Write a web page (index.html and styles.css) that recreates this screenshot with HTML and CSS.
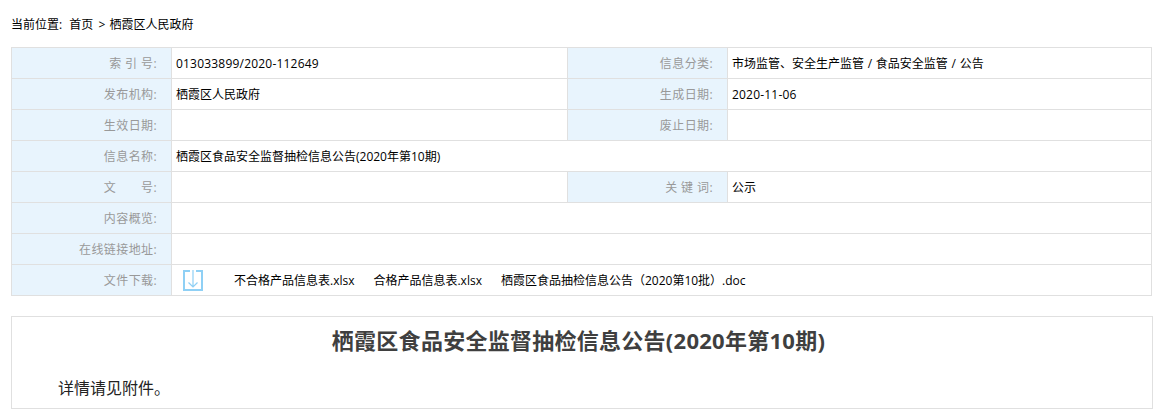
FILE: index.html
```html
<!DOCTYPE html>
<html lang="zh-CN">
<head>
<meta charset="utf-8">
<title>栖霞区食品安全监督抽检信息公告(2020年第10期)</title>
<link rel="stylesheet" href="styles.css">
</head>
<body>
<div class="crumb">当前位置: <a class="home">首页</a> <span class="gt">&gt;</span> <a>栖霞区人民政府</a></div>
<table class="meta">
<colgroup><col class="c1"><col class="c2"><col class="c3"><col class="c4"></colgroup>
<tr><th>索 引 号:</th><td><span class="num">013033899/2020-112649</span></td><th>信息分类:</th><td>市场监管、安全生产监管 / 食品安全监管 / 公告</td></tr>
<tr><th>发布机构:</th><td>栖霞区人民政府</td><th>生成日期:</th><td><span class="num">2020-11-06</span></td></tr>
<tr><th>生效日期:</th><td></td><th>废止日期:</th><td></td></tr>
<tr><th>信息名称:</th><td colspan="3">栖霞区食品安全监督抽检信息公告(2020年第10期)</td></tr>
<tr><th>文&emsp;&emsp;号:</th><td></td><th>关 键 词:</th><td>公示</td></tr>
<tr><th>内容概览:</th><td colspan="3"></td></tr>
<tr><th>在线链接地址:</th><td colspan="3"></td></tr>
<tr><th>文件下载:</th><td colspan="3"><div class="files">
<svg class="dl" width="20" height="21" viewBox="0 0 20 21" fill="none"><path d="M7 1H1v19h18V1h-6" stroke="#8fd0f5" stroke-width="2"/><path d="M10 0v17M5.500 12.500l4.500 4.500 4.500-4.500" stroke="#8fd0f5" stroke-width="1.200"/></svg>
<a class="file first">不合格产品信息表.xlsx</a><a class="file">合格产品信息表.xlsx</a><a class="file">栖霞区食品抽检信息公告（2020第10批）.doc</a>
</div></td></tr>
</table>
<div class="article">
<h1>栖霞区食品安全监督抽检信息公告(2020年第10期)</h1>
<p>详情请见附件。</p>
</div>
</body>
</html>
```
FILE: styles.css
```css
html, body { margin: 0; padding: 0; background: #fff; }
body {
  padding: 0 8px 0 11px;
  font-family: "Open Sans", "Noto Sans CJK SC", sans-serif;
  font-size: 12px;
  color: #000;
  overflow: hidden;
}
.crumb { height: 47px; line-height: 49px; color: #000; white-space: pre-wrap; }
.crumb .home { margin-left: 4px; }
.gt { margin: 0 1px 0 2px; }
.meta {
  width: 1141px;
  border-collapse: collapse;
  table-layout: fixed;
}
.c1 { width: 160px; }
.c2 { width: 396px; }
.c3 { width: 160px; }
.meta th, .meta td {
  border: 1px solid #e0e0e0;
  height: 30px;
  padding: 0;
  font-weight: 400;
}
.meta th {
  background: #e8f4fd;
  color: #999;
  text-align: right;
  padding-right: 14px;
  letter-spacing: .4px;
}
.meta td { padding-left: 4px; color: #000; word-spacing: .6px; }
.num { letter-spacing: .2px; }
.files { display: flex; align-items: center; }
.dl { margin-left: 7px; flex: none; }
.file { margin-left: 19px; white-space: nowrap; }
.file.first { margin-left: 31px; }
.article {
  margin-top: 20px;
  width: 1140px;
  height: 91px;
  border: 1px solid #e0e0e0;
}
.article h1 {
  margin: 0;
  padding: 7px 7px 0 0;
  font-size: 22px;
  line-height: 32px;
  font-weight: 700;
  text-align: center;
  letter-spacing: .27px;
  color: #3f3f3f;
}
.article p {
  margin: 0;
  padding: 20px 0 0 46px;
  font-size: 16px;
  line-height: 24px;
  color: #222;
}
```
